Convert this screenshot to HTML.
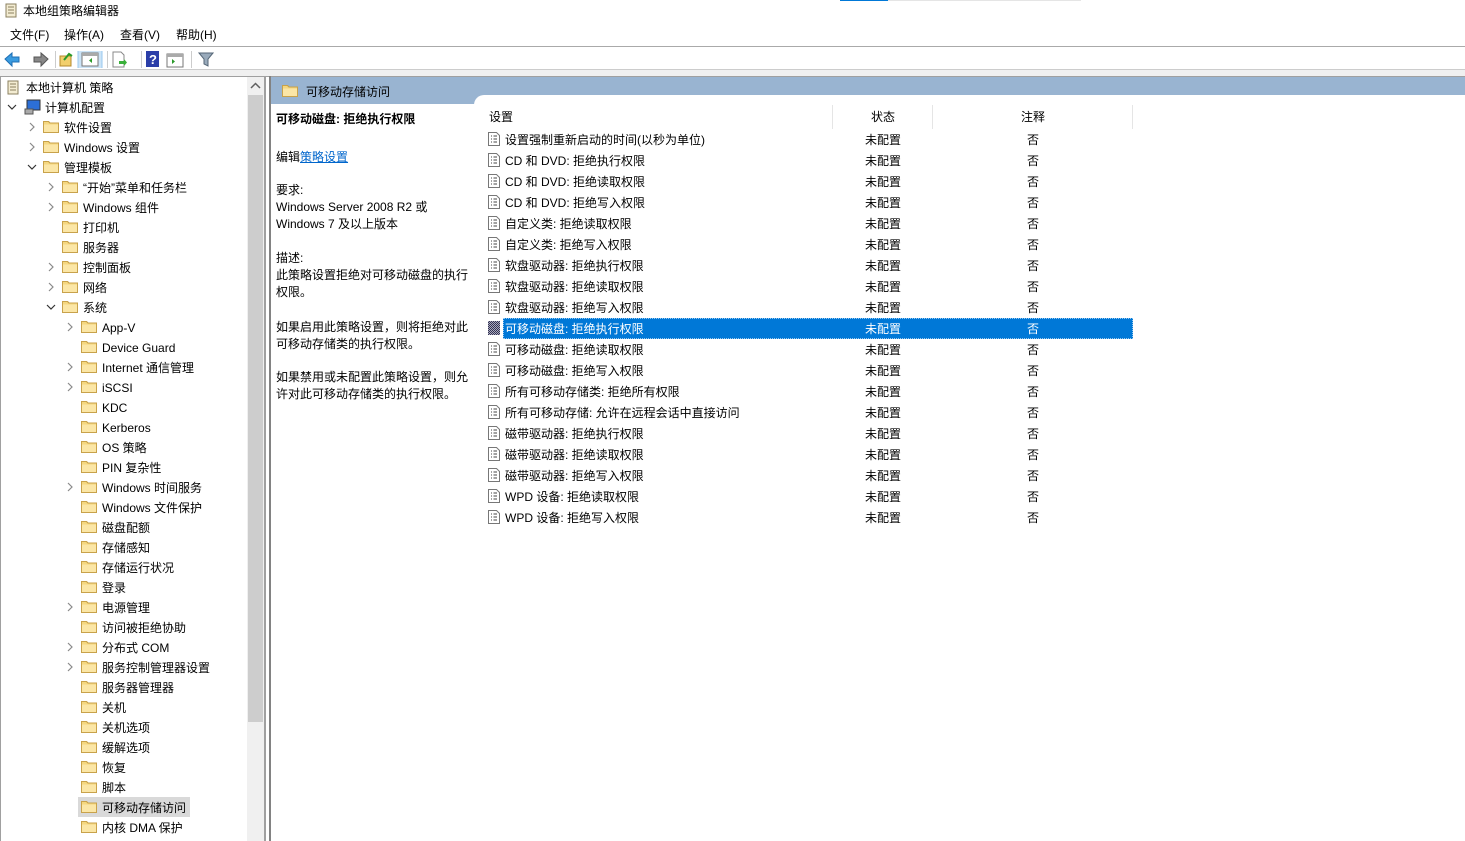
<!DOCTYPE html>
<html><head><meta charset="utf-8"><style>
*{margin:0;padding:0;box-sizing:border-box}
body{width:1465px;height:841px;overflow:hidden;background:#fff;position:relative;font:12px "Liberation Sans","Noto Sans CJK SC",sans-serif;color:#000}
.a{position:absolute;white-space:nowrap}
.t{position:absolute;white-space:nowrap;line-height:20px;height:20px;margin-top:1px}
.f{position:absolute;width:16px;height:13px}
.ch{position:absolute;width:10px;height:10px}
.r{position:absolute;left:486px;height:21px;line-height:21px;white-space:nowrap;margin-top:1px}
.di{position:absolute;left:488px;width:12px;height:14px}
</style></head><body>
<svg width="0" height="0" style="position:absolute"><defs>
<symbol id="fo" viewBox="0 0 16 13"><path d="M0.5 1.5h5l1.5 1.5h8.5v9.5h-15z" fill="#f5d77f" stroke="#c8a24b"/><path d="M1 4.5h14.5v7.5h-14.5z" fill="#fbe6a6"/><path d="M0.5 1.5h5l1.5 1.5h8.5v9.5h-15z" fill="none" stroke="#c8a24b"/></symbol>
<symbol id="cr" viewBox="0 0 10 10"><path d="M3 1l4 4-4 4" fill="none" stroke="#8a8a8a" stroke-width="1.2"/></symbol>
<symbol id="cd" viewBox="0 0 10 10"><path d="M1 3l4 4 4-4" fill="none" stroke="#333" stroke-width="1.2"/></symbol>
<symbol id="dc" viewBox="0 0 12 14"><path d="M.5.5h8l3 3v10h-11z" fill="#fff" stroke="#777"/><path d="M3 4h1M3 7h1M3 10h1M5.5 4h3.5M5.5 7h3.5M5.5 10h3.5" stroke="#444"/></symbol>
</defs></svg>

<svg class="a" style="left:4px;top:3px" width="14" height="16" viewBox="0 0 14 16"><path d="M2 1h10v13H2z" fill="#f3ecd2" stroke="#8b8060"/><path d="M4 4h6M4 7h6M4 10h6" stroke="#8b8060"/></svg>
<div class="a" style="left:23px;top:3px;line-height:16px">本地组策略编辑器</div>
<div class="a" style="left:840px;top:0;width:48px;height:1px;background:#0078d7"></div>
<div class="a" style="left:888px;top:0;width:193px;height:1px;background:#e5e5e5"></div>
<div class="a" style="left:10px;top:27px;line-height:16px">文件(F)</div>
<div class="a" style="left:64px;top:27px;line-height:16px">操作(A)</div>
<div class="a" style="left:120px;top:27px;line-height:16px">查看(V)</div>
<div class="a" style="left:176px;top:27px;line-height:16px">帮助(H)</div>
<div class="a" style="left:0;top:46px;width:1465px;height:1px;background:#aaa"></div>
<svg class="a" style="left:4px;top:51px" width="210" height="17">
<path d="M1 8l7-6v4h7v5H8v4z" fill="#3a9be0" stroke="#1f6fb5"/>
<path d="M44 8l-7-6v4h-7v5h7v4z" fill="#888" stroke="#555"/>
<rect x="51" y="0" width="1" height="17" fill="#ccc"/>
<path d="M56 5h11v10H56z" fill="#f2cf6c" stroke="#b48a2c"/><path d="M60 9l5-6 3 2" stroke="#2a9a2a" stroke-width="2" fill="none"/>
<rect x="74" y="-2" width="24" height="20" fill="#cce4f7" stroke="#99c9ef"/>
<rect x="78" y="2" width="16" height="13" fill="#fff" stroke="#777"/><rect x="78" y="2" width="16" height="3" fill="#aaa"/><path d="M88 7v5l-3-2.5z" fill="#2a9a2a"/>
<rect x="103" y="0" width="1" height="17" fill="#ccc"/>
<path d="M109 1h8l3 3v12h-11z" fill="#fff" stroke="#888"/><path d="M115 10h5v-2l3 3.5-3 3.5v-2h-5z" fill="#3ab03a"/>
<rect x="137" y="0" width="1" height="17" fill="#ccc"/>
<rect x="142" y="0" width="13" height="16" fill="#2b3ea8"/><text x="145" y="13" fill="#fff" font-size="13" font-weight="bold" font-family="Liberation Sans">?</text>
<rect x="163" y="3" width="16" height="13" fill="#fff" stroke="#777"/><rect x="163" y="3" width="16" height="3" fill="#aaa"/><path d="M168 8v5l3-2.5z" fill="#2a9a2a"/>
<rect x="187" y="0" width="1" height="17" fill="#ccc"/>
<path d="M195 2h14l-5 6v7l-4-2V8z" fill="#9ab" stroke="#567"/>
</svg>
<div class="a" style="left:0;top:69px;width:1465px;height:1px;background:#ccc"></div>
<div class="a" style="left:0;top:70px;width:1465px;height:6px;background:#f0f0f0"></div>
<div class="a" style="left:0;top:76px;width:1465px;height:1px;background:#a0a0a0"></div>

<div class="a" style="left:0;top:76px;width:1px;height:765px;background:#a0a0a0"></div>
<div class="a" style="left:247px;top:77px;width:17px;height:764px;background:#f0f0f0"></div>
<div class="a" style="left:248px;top:95px;width:15px;height:627px;background:#cdcdcd"></div>
<svg class="a" style="left:250px;top:82px" width="11" height="8"><path d="M1 6l4.5-4.5L10 6" fill="none" stroke="#606060" stroke-width="1.5"/></svg>
<div class="a" style="left:264px;top:76px;width:2px;height:765px;background:#a0a0a0"></div>
<div class="a" style="left:269px;top:76px;width:2px;height:765px;background:#828282"></div>

<svg class="a" style="left:6px;top:80px" width="14" height="16" viewBox="0 0 14 16"><path d="M2 1h10v13H2z" fill="#f3ecd2" stroke="#8b8060"/><path d="M4 4h6M4 7h6M4 10h6" stroke="#8b8060"/></svg>
<div class="t" style="left:26px;top:77px">本地计算机 策略</div>
<svg class="ch" style="left:7px;top:102px"><use href="#cd"/></svg>
<svg class="a" style="left:24px;top:99px" width="17" height="16"><rect x="3" y="1" width="13" height="10" fill="#2c6fd6" stroke="#333"/><rect x="1" y="10" width="8" height="5" fill="#aaa" stroke="#555"/></svg>
<div class="t" style="left:45px;top:97px">计算机配置</div>

<svg class="ch" style="left:27px;top:122px"><use href="#cr"/></svg><svg class="f" style="left:43px;top:120px"><use href="#fo"/></svg><div class="t" style="left:64px;top:117px">软件设置</div>
<svg class="ch" style="left:27px;top:142px"><use href="#cr"/></svg><svg class="f" style="left:43px;top:140px"><use href="#fo"/></svg><div class="t" style="left:64px;top:137px">Windows 设置</div>
<svg class="ch" style="left:27px;top:162px"><use href="#cd"/></svg><svg class="f" style="left:43px;top:160px"><use href="#fo"/></svg><div class="t" style="left:64px;top:157px">管理模板</div>

<svg class="ch" style="left:46px;top:182px"><use href="#cr"/></svg><svg class="f" style="left:62px;top:180px"><use href="#fo"/></svg><div class="t" style="left:83px;top:177px">“开始”菜单和任务栏</div>
<svg class="ch" style="left:46px;top:202px"><use href="#cr"/></svg><svg class="f" style="left:62px;top:200px"><use href="#fo"/></svg><div class="t" style="left:83px;top:197px">Windows 组件</div>
<svg class="f" style="left:62px;top:220px"><use href="#fo"/></svg><div class="t" style="left:83px;top:217px">打印机</div>
<svg class="f" style="left:62px;top:240px"><use href="#fo"/></svg><div class="t" style="left:83px;top:237px">服务器</div>
<svg class="ch" style="left:46px;top:262px"><use href="#cr"/></svg><svg class="f" style="left:62px;top:260px"><use href="#fo"/></svg><div class="t" style="left:83px;top:257px">控制面板</div>
<svg class="ch" style="left:46px;top:282px"><use href="#cr"/></svg><svg class="f" style="left:62px;top:280px"><use href="#fo"/></svg><div class="t" style="left:83px;top:277px">网络</div>
<svg class="ch" style="left:46px;top:302px"><use href="#cd"/></svg><svg class="f" style="left:62px;top:300px"><use href="#fo"/></svg><div class="t" style="left:83px;top:297px">系统</div>

<div class="a" style="left:78px;top:797px;width:112px;height:20px;background:#d9d9d9"></div>
<svg class="ch" style="left:65px;top:322px"><use href="#cr"/></svg><svg class="f" style="left:81px;top:320px"><use href="#fo"/></svg><div class="t" style="left:102px;top:317px">App-V</div>
<svg class="f" style="left:81px;top:340px"><use href="#fo"/></svg><div class="t" style="left:102px;top:337px">Device Guard</div>
<svg class="ch" style="left:65px;top:362px"><use href="#cr"/></svg><svg class="f" style="left:81px;top:360px"><use href="#fo"/></svg><div class="t" style="left:102px;top:357px">Internet 通信管理</div>
<svg class="ch" style="left:65px;top:382px"><use href="#cr"/></svg><svg class="f" style="left:81px;top:380px"><use href="#fo"/></svg><div class="t" style="left:102px;top:377px">iSCSI</div>
<svg class="f" style="left:81px;top:400px"><use href="#fo"/></svg><div class="t" style="left:102px;top:397px">KDC</div>
<svg class="f" style="left:81px;top:420px"><use href="#fo"/></svg><div class="t" style="left:102px;top:417px">Kerberos</div>
<svg class="f" style="left:81px;top:440px"><use href="#fo"/></svg><div class="t" style="left:102px;top:437px">OS 策略</div>
<svg class="f" style="left:81px;top:460px"><use href="#fo"/></svg><div class="t" style="left:102px;top:457px">PIN 复杂性</div>
<svg class="ch" style="left:65px;top:482px"><use href="#cr"/></svg><svg class="f" style="left:81px;top:480px"><use href="#fo"/></svg><div class="t" style="left:102px;top:477px">Windows 时间服务</div>
<svg class="f" style="left:81px;top:500px"><use href="#fo"/></svg><div class="t" style="left:102px;top:497px">Windows 文件保护</div>
<svg class="f" style="left:81px;top:520px"><use href="#fo"/></svg><div class="t" style="left:102px;top:517px">磁盘配额</div>
<svg class="f" style="left:81px;top:540px"><use href="#fo"/></svg><div class="t" style="left:102px;top:537px">存储感知</div>
<svg class="f" style="left:81px;top:560px"><use href="#fo"/></svg><div class="t" style="left:102px;top:557px">存储运行状况</div>
<svg class="f" style="left:81px;top:580px"><use href="#fo"/></svg><div class="t" style="left:102px;top:577px">登录</div>
<svg class="ch" style="left:65px;top:602px"><use href="#cr"/></svg><svg class="f" style="left:81px;top:600px"><use href="#fo"/></svg><div class="t" style="left:102px;top:597px">电源管理</div>
<svg class="f" style="left:81px;top:620px"><use href="#fo"/></svg><div class="t" style="left:102px;top:617px">访问被拒绝协助</div>
<svg class="ch" style="left:65px;top:642px"><use href="#cr"/></svg><svg class="f" style="left:81px;top:640px"><use href="#fo"/></svg><div class="t" style="left:102px;top:637px">分布式 COM</div>
<svg class="ch" style="left:65px;top:662px"><use href="#cr"/></svg><svg class="f" style="left:81px;top:660px"><use href="#fo"/></svg><div class="t" style="left:102px;top:657px">服务控制管理器设置</div>
<svg class="f" style="left:81px;top:680px"><use href="#fo"/></svg><div class="t" style="left:102px;top:677px">服务器管理器</div>
<svg class="f" style="left:81px;top:700px"><use href="#fo"/></svg><div class="t" style="left:102px;top:697px">关机</div>
<svg class="f" style="left:81px;top:720px"><use href="#fo"/></svg><div class="t" style="left:102px;top:717px">关机选项</div>
<svg class="f" style="left:81px;top:740px"><use href="#fo"/></svg><div class="t" style="left:102px;top:737px">缓解选项</div>
<svg class="f" style="left:81px;top:760px"><use href="#fo"/></svg><div class="t" style="left:102px;top:757px">恢复</div>
<svg class="f" style="left:81px;top:780px"><use href="#fo"/></svg><div class="t" style="left:102px;top:777px">脚本</div>
<svg class="f" style="left:81px;top:800px"><use href="#fo"/></svg><div class="t" style="left:102px;top:797px">可移动存储访问</div>
<svg class="f" style="left:81px;top:820px"><use href="#fo"/></svg><div class="t" style="left:102px;top:817px">内核 DMA 保护</div>

<div class="a" style="left:271px;top:77px;width:1194px;height:27px;background:#99b4d1"></div>
<div class="a" style="left:474px;top:95px;width:991px;height:10px;background:#fff;border-top-left-radius:10px"></div>
<svg class="f" style="left:282px;top:84px"><use href="#fo"/></svg>
<div class="a" style="left:306px;top:84px;line-height:16px">可移动存储访问</div>

<div class="a" style="left:276px;top:111px;font-weight:bold;line-height:16px">可移动磁盘: 拒绝执行权限</div>
<div class="a" style="left:276px;top:149px;line-height:16px">编辑<span style="color:#0066cc;text-decoration:underline">策略设置</span></div>
<div class="a" style="left:276px;top:182px;line-height:17px;white-space:normal;width:195px">要求:<br>Windows Server 2008 R2 或 Windows 7 及以上版本</div>
<div class="a" style="left:276px;top:250px;line-height:17px;white-space:normal;width:195px">描述:<br>此策略设置拒绝对可移动磁盘的执行权限。</div>
<div class="a" style="left:276px;top:319px;line-height:17px;white-space:normal;width:195px">如果启用此策略设置，则将拒绝对此可移动存储类的执行权限。</div>
<div class="a" style="left:276px;top:369px;line-height:17px;white-space:normal;width:195px">如果禁用或未配置此策略设置，则允许对此可移动存储类的执行权限。</div>

<div class="a" style="left:489px;top:109px;line-height:17px">设置</div>
<div class="a" style="left:832px;top:105px;width:1px;height:24px;background:#e5e5e5"></div>
<div class="a" style="left:871px;top:109px;line-height:17px">状态</div>
<div class="a" style="left:932px;top:105px;width:1px;height:24px;background:#e5e5e5"></div>
<div class="a" style="left:1021px;top:109px;line-height:17px">注释</div>
<div class="a" style="left:1132px;top:105px;width:1px;height:24px;background:#e5e5e5"></div>

<div class="a" style="left:503px;top:318px;width:630px;height:21px;background:#0078d7;outline:1px dotted #99c9ef;outline-offset:-1px"></div>

<div style="position:absolute;left:0;top:129px">
<svg class="di" style="top:3px"><use href="#dc"/></svg><div class="r" style="left:505px;top:0">设置强制重新启动的时间(以秒为单位)</div><div class="r" style="left:865px;top:0">未配置</div><div class="r" style="left:1027px;top:0">否</div>
<svg class="di" style="top:24px"><use href="#dc"/></svg><div class="r" style="left:505px;top:21px">CD 和 DVD: 拒绝执行权限</div><div class="r" style="left:865px;top:21px">未配置</div><div class="r" style="left:1027px;top:21px">否</div>
<svg class="di" style="top:45px"><use href="#dc"/></svg><div class="r" style="left:505px;top:42px">CD 和 DVD: 拒绝读取权限</div><div class="r" style="left:865px;top:42px">未配置</div><div class="r" style="left:1027px;top:42px">否</div>
<svg class="di" style="top:66px"><use href="#dc"/></svg><div class="r" style="left:505px;top:63px">CD 和 DVD: 拒绝写入权限</div><div class="r" style="left:865px;top:63px">未配置</div><div class="r" style="left:1027px;top:63px">否</div>
<svg class="di" style="top:87px"><use href="#dc"/></svg><div class="r" style="left:505px;top:84px">自定义类: 拒绝读取权限</div><div class="r" style="left:865px;top:84px">未配置</div><div class="r" style="left:1027px;top:84px">否</div>
<svg class="di" style="top:108px"><use href="#dc"/></svg><div class="r" style="left:505px;top:105px">自定义类: 拒绝写入权限</div><div class="r" style="left:865px;top:105px">未配置</div><div class="r" style="left:1027px;top:105px">否</div>
<svg class="di" style="top:129px"><use href="#dc"/></svg><div class="r" style="left:505px;top:126px">软盘驱动器: 拒绝执行权限</div><div class="r" style="left:865px;top:126px">未配置</div><div class="r" style="left:1027px;top:126px">否</div>
<svg class="di" style="top:150px"><use href="#dc"/></svg><div class="r" style="left:505px;top:147px">软盘驱动器: 拒绝读取权限</div><div class="r" style="left:865px;top:147px">未配置</div><div class="r" style="left:1027px;top:147px">否</div>
<svg class="di" style="top:171px"><use href="#dc"/></svg><div class="r" style="left:505px;top:168px">软盘驱动器: 拒绝写入权限</div><div class="r" style="left:865px;top:168px">未配置</div><div class="r" style="left:1027px;top:168px">否</div>
<div class="a" style="left:488px;top:192px;width:12px;height:14px;background:repeating-conic-gradient(#335 0 25%,#aab 0 50%) 0 0/2px 2px"></div><div class="r" style="left:505px;top:189px;color:#fff">可移动磁盘: 拒绝执行权限</div><div class="r" style="left:865px;top:189px;color:#fff">未配置</div><div class="r" style="left:1027px;top:189px;color:#fff">否</div>
<svg class="di" style="top:213px"><use href="#dc"/></svg><div class="r" style="left:505px;top:210px">可移动磁盘: 拒绝读取权限</div><div class="r" style="left:865px;top:210px">未配置</div><div class="r" style="left:1027px;top:210px">否</div>
<svg class="di" style="top:234px"><use href="#dc"/></svg><div class="r" style="left:505px;top:231px">可移动磁盘: 拒绝写入权限</div><div class="r" style="left:865px;top:231px">未配置</div><div class="r" style="left:1027px;top:231px">否</div>
<svg class="di" style="top:255px"><use href="#dc"/></svg><div class="r" style="left:505px;top:252px">所有可移动存储类: 拒绝所有权限</div><div class="r" style="left:865px;top:252px">未配置</div><div class="r" style="left:1027px;top:252px">否</div>
<svg class="di" style="top:276px"><use href="#dc"/></svg><div class="r" style="left:505px;top:273px">所有可移动存储: 允许在远程会话中直接访问</div><div class="r" style="left:865px;top:273px">未配置</div><div class="r" style="left:1027px;top:273px">否</div>
<svg class="di" style="top:297px"><use href="#dc"/></svg><div class="r" style="left:505px;top:294px">磁带驱动器: 拒绝执行权限</div><div class="r" style="left:865px;top:294px">未配置</div><div class="r" style="left:1027px;top:294px">否</div>
<svg class="di" style="top:318px"><use href="#dc"/></svg><div class="r" style="left:505px;top:315px">磁带驱动器: 拒绝读取权限</div><div class="r" style="left:865px;top:315px">未配置</div><div class="r" style="left:1027px;top:315px">否</div>
<svg class="di" style="top:339px"><use href="#dc"/></svg><div class="r" style="left:505px;top:336px">磁带驱动器: 拒绝写入权限</div><div class="r" style="left:865px;top:336px">未配置</div><div class="r" style="left:1027px;top:336px">否</div>
<svg class="di" style="top:360px"><use href="#dc"/></svg><div class="r" style="left:505px;top:357px">WPD 设备: 拒绝读取权限</div><div class="r" style="left:865px;top:357px">未配置</div><div class="r" style="left:1027px;top:357px">否</div>
<svg class="di" style="top:381px"><use href="#dc"/></svg><div class="r" style="left:505px;top:378px">WPD 设备: 拒绝写入权限</div><div class="r" style="left:865px;top:378px">未配置</div><div class="r" style="left:1027px;top:378px">否</div>
</div>
</body></html>
